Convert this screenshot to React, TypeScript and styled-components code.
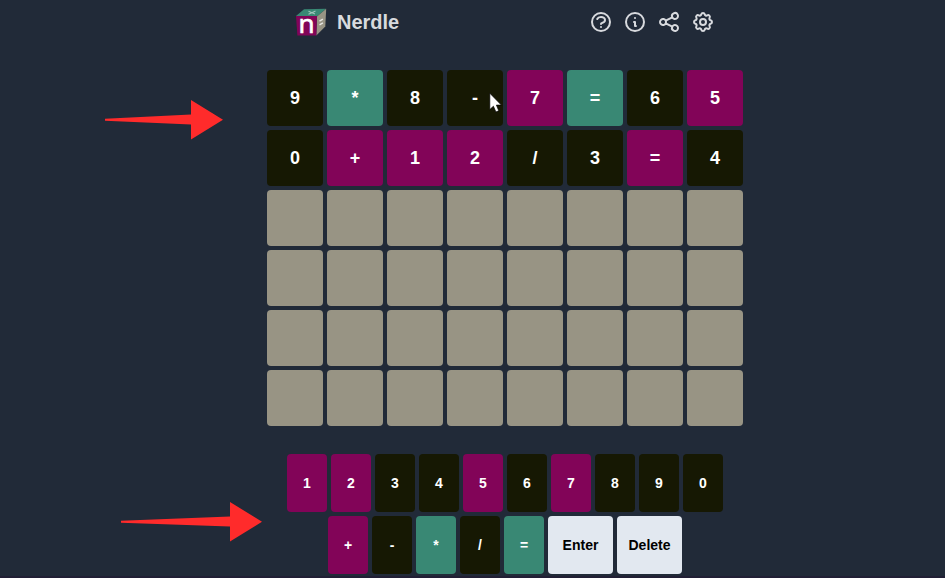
import React from 'react';
import styled, { createGlobalStyle } from 'styled-components';
import {
  HiOutlineQuestionMarkCircle,
  HiOutlineInformationCircle,
  HiOutlineShare,
  HiOutlineCog,
} from 'react-icons/hi';

type Tone = 'black' | 'green' | 'purple' | 'empty' | 'action';

const tones: Record<Tone, string> = {
  black: '#161803',
  green: '#398874',
  purple: '#820458',
  empty: '#989484',
  action: '#e2e8f0',
};

const GlobalStyle = createGlobalStyle`
  * { box-sizing: border-box; }
  body {
    margin: 0;
    background: #212a38;
    font-family: "Liberation Sans", Arial, sans-serif;
  }
`;

const Page = styled.div`
  position: relative;
  width: 945px;
  height: 578px;
  overflow: hidden;
  background: #212a38;
  border-bottom: 2px solid #211f35;
  display: flex;
  flex-direction: column;
  padding-left: 65px;
  align-items: center;
`;

const Header = styled.header`
  display: flex;
  align-items: center;
  justify-content: space-between;
  width: 420px;
  height: 44px;
`;

const Brand = styled.div`
  display: flex;
  align-items: center;
  gap: 9px;
`;

const LogoSvg = styled.svg`
  overflow: visible;
`;

const Title = styled.h1`
  margin: 0;
  font-size: 20px;
  line-height: 28px;
  font-weight: 700;
  color: #d8dade;
`;

const Toolbar = styled.nav`
  display: flex;
  gap: 10px;
`;

const IconButton = styled.button`
  display: flex;
  padding: 0;
  border: 0;
  background: none;
  color: #d8dade;
  font-size: 24px;
`;

const Board = styled.main`
  display: grid;
  grid-template-columns: repeat(8, 56px);
  grid-auto-rows: 56px;
  gap: 4px;
  margin-top: 26px;
`;

const Tile = styled.div<{ $tone: Tone }>`
  display: flex;
  align-items: center;
  justify-content: center;
  border-radius: 4px;
  background: ${(p) => tones[p.$tone]};
  color: #fff;
  font-size: 18px;
  font-weight: 700;
`;

const Keyboard = styled.section`
  display: flex;
  flex-direction: column;
  align-items: center;
  gap: 4px;
  margin-top: 28px;
`;

const KeyRow = styled.div`
  display: flex;
  gap: 4px;
`;

const Key = styled.button<{ $tone: Tone }>`
  display: flex;
  align-items: center;
  justify-content: center;
  width: ${(p) => (p.$tone === 'action' ? 65 : 40)}px;
  height: 58px;
  padding: 0;
  border: 0;
  border-radius: 4px;
  background: ${(p) => tones[p.$tone]};
  color: ${(p) => (p.$tone === 'action' ? '#000' : '#fff')};
  font-family: inherit;
  font-size: 14px;
  font-weight: 700;
`;

const Pointer = styled.svg<{ $x: number; $y: number }>`
  position: absolute;
  left: ${(p) => p.$x}px;
  top: ${(p) => p.$y}px;
`;

const Logo = () => (
  <LogoSvg width="33" height="32" viewBox="0 0 33 32">
    <path d="M1 10 9 3.2 31 2.8 22 10.5Z" fill="#398874" />
    <path d="M22 10.5 31.2 2.8 30.3 20.5 21.3 29.5Z" fill="#989484" />
    <path d="M1 10H22L21.3 29.5H2.4Z" fill="#820458" />
    <path d="M13.5 5.2 20 8M20.5 5 13.5 8.2" stroke="#9fc4bb" strokeWidth="1.1" />
    <path d="m24.5 15.2 3.4-2m-3.4 5.6 3.4-2" stroke="#e7e6e2" strokeWidth="1.5" />
    <text
      x="3.6"
      y="27.3"
      fontSize="26"
      fontFamily="Noto Sans, sans-serif"
      fill="#fff"
      stroke="#fff"
      strokeWidth=".6"
    >
      n
    </text>
  </LogoSvg>
);

/* The head is 32px long; the shaft tapers over the rest of the length. */
const Arrow = ({ x, y, length }: { x: number; y: number; length: number }) => {
  const neck = length - 32;
  return (
    <Pointer $x={x} $y={y} width={length} height="40" viewBox={`0 0 ${length} 40`}>
      <path
        d={`M0 18.8 ${neck} 14.5V0L${length} 19.7 ${neck} 39.5V24.5L0 20.7Z`}
        fill="#ff2b2b"
      />
    </Pointer>
  );
};

const board: [string, Tone][] = [
  ['9', 'black'], ['*', 'green'], ['8', 'black'], ['-', 'black'],
  ['7', 'purple'], ['=', 'green'], ['6', 'black'], ['5', 'purple'],
  ['0', 'black'], ['+', 'purple'], ['1', 'purple'], ['2', 'purple'],
  ['/', 'black'], ['3', 'black'], ['=', 'purple'], ['4', 'black'],
  ...Array.from({ length: 32 }, (): [string, Tone] => ['', 'empty']),
];

const keys: [string, Tone][][] = [
  [
    ['1', 'purple'], ['2', 'purple'], ['3', 'black'], ['4', 'black'], ['5', 'purple'],
    ['6', 'black'], ['7', 'purple'], ['8', 'black'], ['9', 'black'], ['0', 'black'],
  ],
  [
    ['+', 'purple'], ['-', 'black'], ['*', 'green'], ['/', 'black'], ['=', 'green'],
    ['Enter', 'action'], ['Delete', 'action'],
  ],
];

export default function App() {
  return (
    <Page>
      <GlobalStyle />
      <Header>
        <Brand>
          <Logo />
          <Title>Nerdle</Title>
        </Brand>
        <Toolbar>
          <IconButton aria-label="Help"><HiOutlineQuestionMarkCircle /></IconButton>
          <IconButton aria-label="Information"><HiOutlineInformationCircle /></IconButton>
          <IconButton aria-label="Share"><HiOutlineShare /></IconButton>
          <IconButton aria-label="Settings"><HiOutlineCog /></IconButton>
        </Toolbar>
      </Header>
      <Board>
        {board.map(([label, tone], i) => (
          <Tile key={i} $tone={tone}>{label}</Tile>
        ))}
      </Board>
      <Keyboard>
        {keys.map((row, i) => (
          <KeyRow key={i}>
            {row.map(([label, tone]) => (
              <Key key={label} $tone={tone}>{label}</Key>
            ))}
          </KeyRow>
        ))}
      </Keyboard>
      <Arrow x={105} y={99.5} length={118} />
      <Arrow x={121} y={501.5} length={141} />
      <Pointer $x={489} $y={92} width="14" height="22" viewBox="0 0 14 22">
        <path
          d="M.8 1.2V17.6L4.4 14.2 6.9 20 9.8 18.8 7.4 13.1H12.4Z"
          fill="#fff"
          stroke="#000"
          strokeWidth=".7"
        />
      </Pointer>
    </Page>
  );
}
